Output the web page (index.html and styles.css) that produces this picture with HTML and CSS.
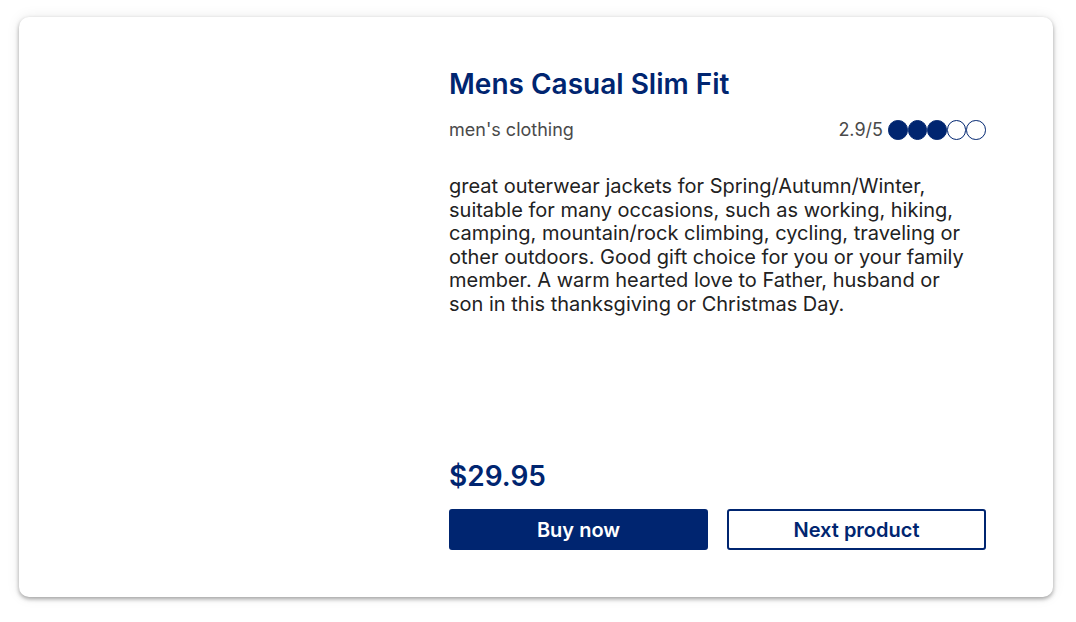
FILE: index.html
```html
<!DOCTYPE html>
<html>
<head>
<meta charset="utf-8">
<link rel="stylesheet" href="styles.css">
</head>
<body>
<div class="page">
  <div class="card">
    <div class="image"></div>
    <div class="info">
      <h1 class="title">Mens Casual Slim Fit</h1>
      <div class="meta">
        <span class="category">men's clothing</span>
        <span class="rating">2.9/5
          <span class="dots">
            <span class="dot full"></span><span class="dot full"></span><span class="dot full"></span><span class="dot"></span><span class="dot"></span>
          </span>
        </span>
      </div>
      <p class="desc">great outerwear jackets for Spring/Autumn/Winter, suitable for many occasions, such as working, hiking, camping, mountain/rock climbing, cycling, traveling or other outdoors. Good gift choice for you or your family member. A warm hearted love to Father, husband or son in this thanksgiving or Christmas Day.</p>
      <div class="price">$29.95</div>
      <div class="actions">
        <button class="btn primary">Buy now</button>
        <button class="btn secondary">Next product</button>
      </div>
    </div>
  </div>
</div>
</body>
</html>
```
FILE: styles.css
```css
* { box-sizing: border-box; }
html, body { margin: 0; padding: 0; background: #fff; }
body { font-family: Inter, "Noto Sans", sans-serif; }
.page { padding: 17px 23px 25px 19px; }
.card {
  height: 580px;
  background: #fff;
  border-radius: 10px;
  box-shadow: 0 2px 4px rgba(0,0,0,0.35), 0 0 14px rgba(0,0,0,0.08);
  display: grid;
  grid-template-columns: 430px 537px;
}
.info {
  display: flex;
  flex-direction: column;
  padding: 49px 0 47px;
}
.title {
  margin: 0;
  font-size: 28px;
  line-height: 36px;
  font-weight: 600;
  color: #002570;
}
.meta {
  margin-top: 17px;
  display: flex;
  justify-content: space-between;
  align-items: center;
  font-size: 18px;
  line-height: 22px;
  color: #4a4a4a;
}
.rating { display: flex; align-items: center; gap: 5px; }
.dots { display: flex; }
.dot {
  width: 19.6px; height: 19.6px;
  border-radius: 50%;
  border: 1px solid #002570;
}
.dot.full { background: #002570; }
.desc {
  margin: 34px 0 0;
  font-size: 20px;
  line-height: 23.6px;
  color: #222;
  max-width: 520px;
}
.price {
  margin-top: auto;
  font-size: 28px;
  font-weight: 600;
  color: #002570;
  line-height: 34px;
}
.actions {
  margin-top: 16px;
  display: grid;
  grid-template-columns: 1fr 1fr;
  gap: 19px;
}
.btn {
  height: 41px;
  font-family: inherit;
  font-size: 20px;
  font-weight: 600;
  border-radius: 3px;
  border: 2px solid #002570;
  cursor: pointer;
}
.primary { background: #002570; color: #fff; }
.secondary { background: #fff; color: #002570; }
```
